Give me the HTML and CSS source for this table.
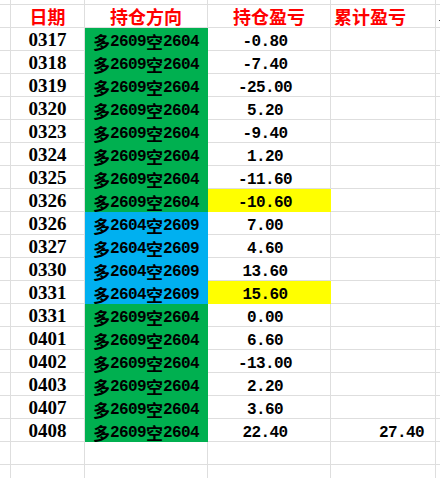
FILE: index.html
```html
<!DOCTYPE html>
<html lang="zh-CN">
<head>
<meta charset="utf-8">
<title>持仓盈亏</title>
<link rel="stylesheet" href="styles.css">
</head>
<body>
<div class="sheet">
  <div class="c rh top"></div><div class="c top"></div><div class="c top"></div><div class="c top"></div><div class="c top"></div><div class="c end top"></div>

  <div class="c rh"></div><div class="c hd">日期</div><div class="c hd">持仓方向</div><div class="c hd">持仓盈亏</div><div class="c hd left">累计盈亏</div><div class="c end"><span class="dot"></span></div>

  <div class="c rh"></div><div class="c date">0317</div><div class="c dir g"><span class="cn">多</span>2609<span class="cn">空</span>2604</div><div class="c pl">-0.80</div><div class="c cum"></div><div class="c end"></div>
  <div class="c rh"></div><div class="c date">0318</div><div class="c dir g"><span class="cn">多</span>2609<span class="cn">空</span>2604</div><div class="c pl">-7.40</div><div class="c cum"></div><div class="c end"></div>
  <div class="c rh"></div><div class="c date">0319</div><div class="c dir g"><span class="cn">多</span>2609<span class="cn">空</span>2604</div><div class="c pl">-25.00</div><div class="c cum"></div><div class="c end"></div>
  <div class="c rh"></div><div class="c date">0320</div><div class="c dir g"><span class="cn">多</span>2609<span class="cn">空</span>2604</div><div class="c pl">5.20</div><div class="c cum"></div><div class="c end"></div>
  <div class="c rh"></div><div class="c date">0323</div><div class="c dir g"><span class="cn">多</span>2609<span class="cn">空</span>2604</div><div class="c pl">-9.40</div><div class="c cum"></div><div class="c end"></div>
  <div class="c rh"></div><div class="c date">0324</div><div class="c dir g"><span class="cn">多</span>2609<span class="cn">空</span>2604</div><div class="c pl">1.20</div><div class="c cum"></div><div class="c end"></div>
  <div class="c rh"></div><div class="c date">0325</div><div class="c dir g"><span class="cn">多</span>2609<span class="cn">空</span>2604</div><div class="c pl">-11.60</div><div class="c cum"></div><div class="c end"></div>
  <div class="c rh"></div><div class="c date">0326</div><div class="c dir g"><span class="cn">多</span>2609<span class="cn">空</span>2604</div><div class="c pl y">-10.60</div><div class="c cum"></div><div class="c end"></div>
  <div class="c rh"></div><div class="c date">0326</div><div class="c dir b"><span class="cn">多</span>2604<span class="cn">空</span>2609</div><div class="c pl">7.00</div><div class="c cum"></div><div class="c end"></div>
  <div class="c rh"></div><div class="c date">0327</div><div class="c dir b"><span class="cn">多</span>2604<span class="cn">空</span>2609</div><div class="c pl">4.60</div><div class="c cum"></div><div class="c end"></div>
  <div class="c rh"></div><div class="c date">0330</div><div class="c dir b"><span class="cn">多</span>2604<span class="cn">空</span>2609</div><div class="c pl">13.60</div><div class="c cum"></div><div class="c end"></div>
  <div class="c rh"></div><div class="c date">0331</div><div class="c dir b"><span class="cn">多</span>2604<span class="cn">空</span>2609</div><div class="c pl y">15.60</div><div class="c cum"></div><div class="c end"></div>
  <div class="c rh"></div><div class="c date">0331</div><div class="c dir g"><span class="cn">多</span>2609<span class="cn">空</span>2604</div><div class="c pl">0.00</div><div class="c cum"></div><div class="c end"></div>
  <div class="c rh"></div><div class="c date">0401</div><div class="c dir g"><span class="cn">多</span>2609<span class="cn">空</span>2604</div><div class="c pl">6.60</div><div class="c cum"></div><div class="c end"></div>
  <div class="c rh"></div><div class="c date">0402</div><div class="c dir g"><span class="cn">多</span>2609<span class="cn">空</span>2604</div><div class="c pl">-13.00</div><div class="c cum"></div><div class="c end"></div>
  <div class="c rh"></div><div class="c date">0403</div><div class="c dir g"><span class="cn">多</span>2609<span class="cn">空</span>2604</div><div class="c pl">2.20</div><div class="c cum"></div><div class="c end"></div>
  <div class="c rh"></div><div class="c date">0407</div><div class="c dir g"><span class="cn">多</span>2609<span class="cn">空</span>2604</div><div class="c pl">3.60</div><div class="c cum"></div><div class="c end"></div>
  <div class="c rh"></div><div class="c date">0408</div><div class="c dir g"><span class="cn">多</span>2609<span class="cn">空</span>2604</div><div class="c pl">22.40</div><div class="c cum">27.40</div><div class="c end"></div>

  <div class="c rh"></div><div class="c"></div><div class="c"></div><div class="c"></div><div class="c"></div><div class="c end"></div>
  <div class="c rh"></div><div class="c"></div><div class="c"></div><div class="c"></div><div class="c"></div><div class="c end"></div>
</div>
</body>
</html>
```

FILE: styles.css
```css
html, body {
  margin: 0;
  padding: 0;
  background: #ffffff;
  overflow: hidden;
}

body {
  width: 440px;
  height: 478px;
}

.sheet {
  display: grid;
  grid-template-columns: 11px 74px 123px 123px 105px 1fr;
  grid-template-rows: 5px;
  grid-auto-rows: 23px;
  width: 440px;
}

.c {
  box-sizing: border-box;
  border-right: 1px solid #dedede;
  border-bottom: 1px solid #dedede;
  display: flex;
  align-items: flex-end;
  justify-content: center;
  white-space: nowrap;
  color: #000000;
}

.c.end {
  border-right: none;
  justify-content: flex-start;
}

.hd {
  font-family: "Noto Sans CJK SC", sans-serif;
  font-weight: 700;
  font-size: 18px;
  line-height: 22px;
  color: #ff0000;
}

.hd.left {
  justify-content: flex-start;
  padding-left: 3px;
}

.dot {
  display: inline-block;
  width: 2px;
  height: 1px;
  background: #333333;
  margin: 0 0 6px 3px;
}

.date {
  font-family: "Liberation Serif", serif;
  font-weight: 700;
  font-size: 19px;
  line-height: 21px;
}

.dir,
.pl,
.cum {
  font-family: "Liberation Mono", monospace;
  font-weight: 700;
  font-size: 16px;
  letter-spacing: -0.6px;
  line-height: 16px;
}

.cn {
  font-family: "Noto Sans CJK SC", sans-serif;
  font-weight: 700;
  font-size: 17px;
  letter-spacing: 0;
}

.pl {
  padding-right: 8px;
}

.cum {
  justify-content: flex-end;
  padding-right: 11px;
}

.g {
  background: #00b050;
  border-color: #00b050;
}

.b {
  background: #00b0f0;
  border-color: #00b0f0;
}

.y {
  background: #ffff00;
  border-color: #ffff00;
}
```
